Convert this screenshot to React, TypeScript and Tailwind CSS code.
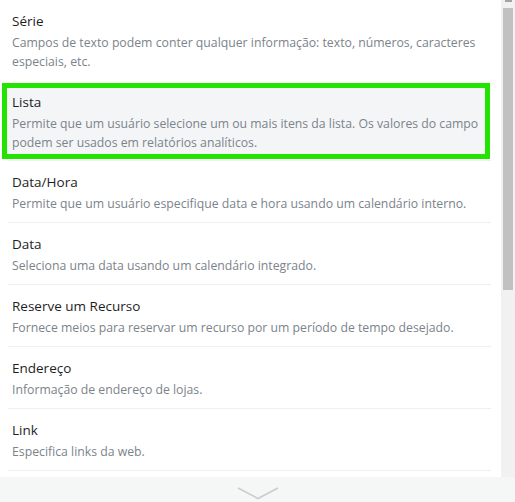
import React from "react";

const font = { fontFamily: '"Open Sans", "Noto Sans", sans-serif' };

type Item = { title: string; lines: string[] };

const items: Item[] = [
  { title: "Data/Hora", lines: ["Permite que um usuário especifique data e hora usando um calendário interno."] },
  { title: "Data", lines: ["Seleciona uma data usando um calendário integrado."] },
  { title: "Reserve um Recurso", lines: ["Fornece meios para reservar um recurso por um período de tempo desejado."] },
  { title: "Endereço", lines: ["Informação de endereço de lojas."] },
  { title: "Link", lines: ["Especifica links da web."] },
];

function Desc({ lines }: { lines: string[] }) {
  return (
    <div className="mt-[1px] text-[12.25px] leading-[19px] text-[#7b838b] whitespace-nowrap">
      {lines.map((l, i) => (
        <div key={i}>{l}</div>
      ))}
    </div>
  );
}

function Title({ children }: { children: React.ReactNode }) {
  return <div className="text-[13.5px] leading-[22px] text-[#1e1e1e]">{children}</div>;
}

export default function App() {
  return (
    <div className="w-[515px] h-[502px] bg-white flex flex-col overflow-hidden" style={font}>
      <div className="flex h-[477px]">
        <div className="w-[501px] overflow-hidden">
          {/* Série */}
          <div className="h-[80px] ml-2 mr-[10px] pl-1 pt-[10px]">
            <Title>Série</Title>
            <Desc
              lines={[
                "Campos de texto podem conter qualquer informação: texto, números, caracteres",
                "especiais, etc.",
              ]}
            />
          </div>
          {/* Lista (selected) */}
          <div className="h-[80px] pt-[3px]">
            <div className="ml-[2px] mr-[11px] h-[76px] border-[5px] border-[#22e400] bg-[#f4f5f7] pl-[5px] pt-[3px]">
              <Title>Lista</Title>
              <Desc
                lines={[
                  "Permite que um usuário selecione um ou mais itens da lista. Os valores do campo",
                  "podem ser usados em relatórios analíticos.",
                ]}
              />
            </div>
          </div>
          <div className="ml-2 mr-[10px] h-px bg-[#efefef]" />
          {items.map((it) => (
            <div key={it.title} className="ml-2 mr-[10px] pl-1 h-[62px] pt-[10px] border-b border-[#efefef]">
              <Title>{it.title}</Title>
              <Desc lines={it.lines} />
            </div>
          ))}
        </div>
        <div className="w-[14px] bg-[#f1f1f1] flex flex-col">
          <div className="h-2 flex justify-center">
            <div className="w-[7px] h-[2px] bg-[#a3a3a3]" />
          </div>
          <div className="mx-[2px] h-[282px] bg-[#c1c1c1]" />
        </div>
      </div>
      <div className="h-[25px] bg-[#f5f6f6] flex justify-center pt-[10px]">
        <svg width="42" height="13" viewBox="0 0 42 13">
          <polyline points="1,1 21,11.5 41,1" fill="none" stroke="#c9cdd1" strokeWidth="1.6" />
        </svg>
      </div>
    </div>
  );
}
